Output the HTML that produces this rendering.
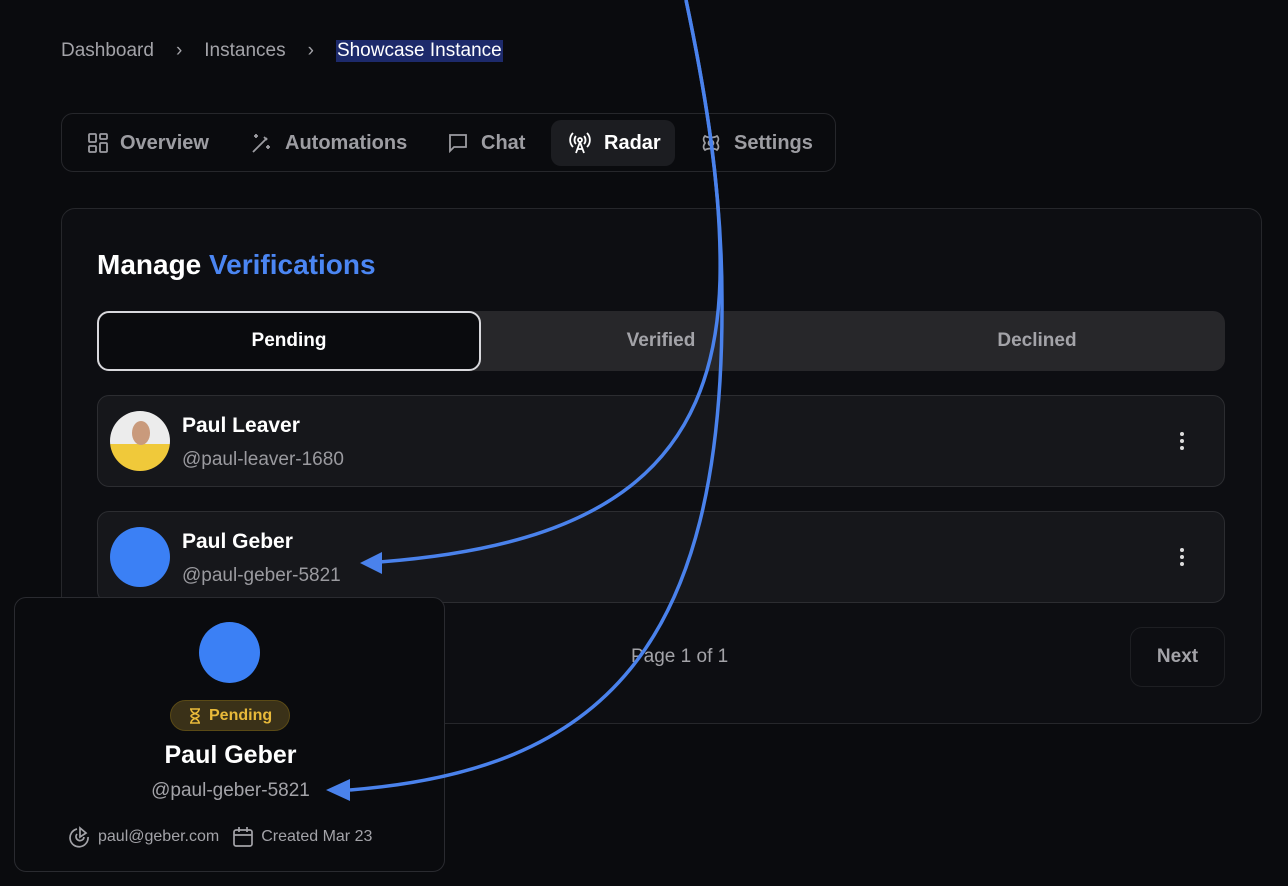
<!DOCTYPE html>
<html><head><style>
*{box-sizing:border-box;margin:0;padding:0}
body{width:1288px;height:886px;background:#0a0b0e;font-family:"Liberation Sans",sans-serif;color:#fff;position:relative;overflow:hidden}
.abs{position:absolute}
.bc{top:40px;left:61px;font-size:19px;color:#a3a3a8;display:flex;gap:0;align-items:center}
.bc span{margin-right:22px}
.tabs{left:61px;top:113px;width:775px;height:59px;border:1px solid #26272b;border-radius:12px}
.tab{position:absolute;top:6px;height:46px;display:flex;align-items:center;font-size:20px;font-weight:bold;color:#9d9da2}
.tab svg{margin-right:12px}
.card{left:61px;top:208px;width:1201px;height:516px;border:1px solid #26272b;border-radius:14px;background:#0d0e12}
.seg{left:97px;top:311px;width:1128px;height:60px;background:#27272a;border-radius:12px}
.row{left:97px;width:1128px;height:92px;border:1px solid #2c2d31;border-radius:12px;background:#16171b}
.nm{font-size:21px;font-weight:bold}
.hd{font-size:19px;color:#9a9a9f}
.dots{position:absolute;right:40px;top:36px;width:4px}
.dots i{display:block;width:4px;height:4px;background:#ddd;border-radius:50%;margin-bottom:3px}
.pop{left:14px;top:597px;width:431px;height:275px;border:1px solid #2a2b30;border-radius:12px;background:#0a0b0e}
</style></head><body>
<div class="abs bc"><span>Dashboard</span><span>›</span><span>Instances</span><span>›</span><span style="background:#1d2a6b;color:#fff;margin:0;padding:0 1px">Showcase Instance</span></div>

<div class="abs tabs">
 <div class="tab" style="left:26px"><svg width="20" height="20" viewBox="0 0 20 20" fill="none" stroke="#9d9da2" stroke-width="1.8"><rect x="1" y="1" width="7" height="8" rx="1"/><rect x="12" y="1" width="7" height="5" rx="1"/><rect x="1" y="13" width="7" height="6" rx="1"/><rect x="12" y="10" width="7" height="9" rx="1"/></svg>Overview</div>
 <div class="tab" style="left:189px"><svg width="22" height="22" viewBox="0 0 22 22" fill="none" stroke="#9d9da2" stroke-width="1.8"><path d="M2 20 L16 6 M13 5l3 3M5 2v4M3 4h4M17 13v4M15 15h4"/></svg>Automations</div>
 <div class="tab" style="left:385px"><svg width="22" height="22" viewBox="0 0 22 22" fill="none" stroke="#9d9da2" stroke-width="1.8"><path d="M3 3h16v12H7l-4 4z"/></svg>Chat</div>
 <div class="tab" style="left:489px;width:124px;background:#1c1d21;border-radius:10px;padding-left:17px;color:#fff"><svg width="24" height="24" viewBox="0 0 24 24" fill="none" stroke="#fff" stroke-width="1.8"><circle cx="12" cy="9" r="2"/><path d="M8 5a6 6 0 0 0 0 8M16 5a6 6 0 0 1 0 8M5 2a10 10 0 0 0 0 14M19 2a10 10 0 0 1 0 14M12 11l-4 11M12 11l4 11M9 18h6"/></svg>Radar</div>
 <div class="tab" style="left:638px"><svg width="22" height="22" viewBox="0 0 22 22" fill="none" stroke="#9d9da2" stroke-width="1.8"><path d="M5 4c3 2 9 2 12 0c2 2 2 4 0 7c2 3 2 5 0 7c-3-2-9-2-12 0c-2-2-2-4 0-7c-2-3-2-5 0-7z"/><circle cx="11" cy="11" r="2.5"/></svg>Settings</div>
</div>

<div class="abs card"></div>
<div class="abs" style="left:97px;top:249px;font-size:28px;font-weight:bold">Manage <span style="color:#4b86f3">Verifications</span></div>
<div class="abs seg">
 <div class="abs" style="left:0;top:0;width:384px;height:60px;border:2px solid #d8d8dc;border-radius:12px;background:#0a0b0e;text-align:center;line-height:56px;font-size:19px;font-weight:bold">Pending</div>
 <div class="abs" style="left:376px;width:376px;top:0;line-height:60px;text-align:center;font-size:19px;font-weight:bold;color:#a3a3a8">Verified</div>
 <div class="abs" style="left:752px;width:376px;top:0;line-height:60px;text-align:center;font-size:19px;font-weight:bold;color:#a3a3a8">Declined</div>
</div>

<div class="abs row" style="top:395px">
 <div class="abs" style="left:12px;top:15px;width:60px;height:60px;border-radius:50%;background:linear-gradient(#ececec 0 55%,#f0c93a 55%);overflow:hidden"><div style="position:absolute;left:22px;top:10px;width:18px;height:24px;border-radius:50%;background:#c99a7c"></div></div>
 <div class="abs nm" style="left:84px;top:18px">Paul Leaver</div>
 <div class="abs hd" style="left:84px;top:53px">@paul-leaver-1680</div>
 <div class="dots"><i></i><i></i><i></i></div>
</div>
<div class="abs row" style="top:511px">
 <div class="abs" style="left:12px;top:15px;width:60px;height:60px;border-radius:50%;background:#3b80f5"></div>
 <div class="abs nm" style="left:84px;top:18px">Paul Geber</div>
 <div class="abs hd" style="left:84px;top:53px">@paul-geber-5821</div>
 <div class="dots"><i></i><i></i><i></i></div>
</div>
<div class="abs" style="left:631px;top:646px;font-size:19px;color:#a3a3a8">Page 1 of 1</div>
<div class="abs" style="left:1130px;top:627px;width:95px;height:60px;border:1px solid #1e1f23;border-radius:12px;text-align:center;line-height:58px;font-size:19px;font-weight:bold;color:#a3a3a8">Next</div>

<div class="abs pop">
 <div class="abs" style="left:184px;top:24px;width:61px;height:61px;border-radius:50%;background:#3b80f5"></div>
 <div class="abs" style="left:155px;top:102px;width:120px;height:31px;border:1px solid #5a4a16;border-radius:16px;background:#3a3118;color:#e8b93a;font-size:16px;font-weight:bold;line-height:29px;padding-left:38px">Pending
  <svg class="abs" style="left:18px;top:7px" width="12" height="16" viewBox="0 0 12 16" fill="none" stroke="#e8b93a" stroke-width="1.6"><path d="M1 1h10M1 15h10M2 1c0 5 8 5 8 7s-8 2-8 7M10 1c0 5-8 5-8 7s8 2 8 7"/></svg></div>
 <div class="abs" style="left:0;width:431px;top:143px;text-align:center;font-size:25px;font-weight:bold">Paul Geber</div>
 <div class="abs" style="left:0;width:431px;top:182px;text-align:center;font-size:19px;color:#a3a3a8">@paul-geber-5821</div>
 <div class="abs" style="left:54px;top:228px;font-size:16px;color:#a3a3a8;display:flex;align-items:center;white-space:nowrap">
  <svg width="22" height="22" viewBox="0 0 22 22" fill="none" stroke="#a3a3a8" stroke-width="1.7" style="margin-right:7px"><path d="M8 3a9 9 0 1 0 11 8"/><path d="M8 8a4 4 0 1 0 7 3"/><path d="M11 2v9l6-4z"/></svg>paul@geber.com
  <svg width="22" height="22" viewBox="0 0 22 22" fill="none" stroke="#a3a3a8" stroke-width="1.7" style="margin:0 7px 0 13px"><rect x="2" y="4" width="18" height="16" rx="2"/><path d="M2 9h18M7 1v5M15 1v5"/></svg>Created Mar 23
 </div>
</div>

<svg class="abs" style="left:0;top:0" width="1288" height="886" fill="none">
 <path d="M686 0 C705 90 722 190 720 280 C715 470 600 545 380 562" stroke="#4a82ec" stroke-width="3.5"/>
 <path d="M360 563 l22 -11 l0 22z" fill="#4a82ec"/>
 <path d="M686 0 C705 90 722 190 722 300 C724 650 600 770 350 790" stroke="#4a82ec" stroke-width="3.5"/>
 <path d="M326 790 l24 -11 l0 22z" fill="#4a82ec"/>
</svg>
</body></html>
